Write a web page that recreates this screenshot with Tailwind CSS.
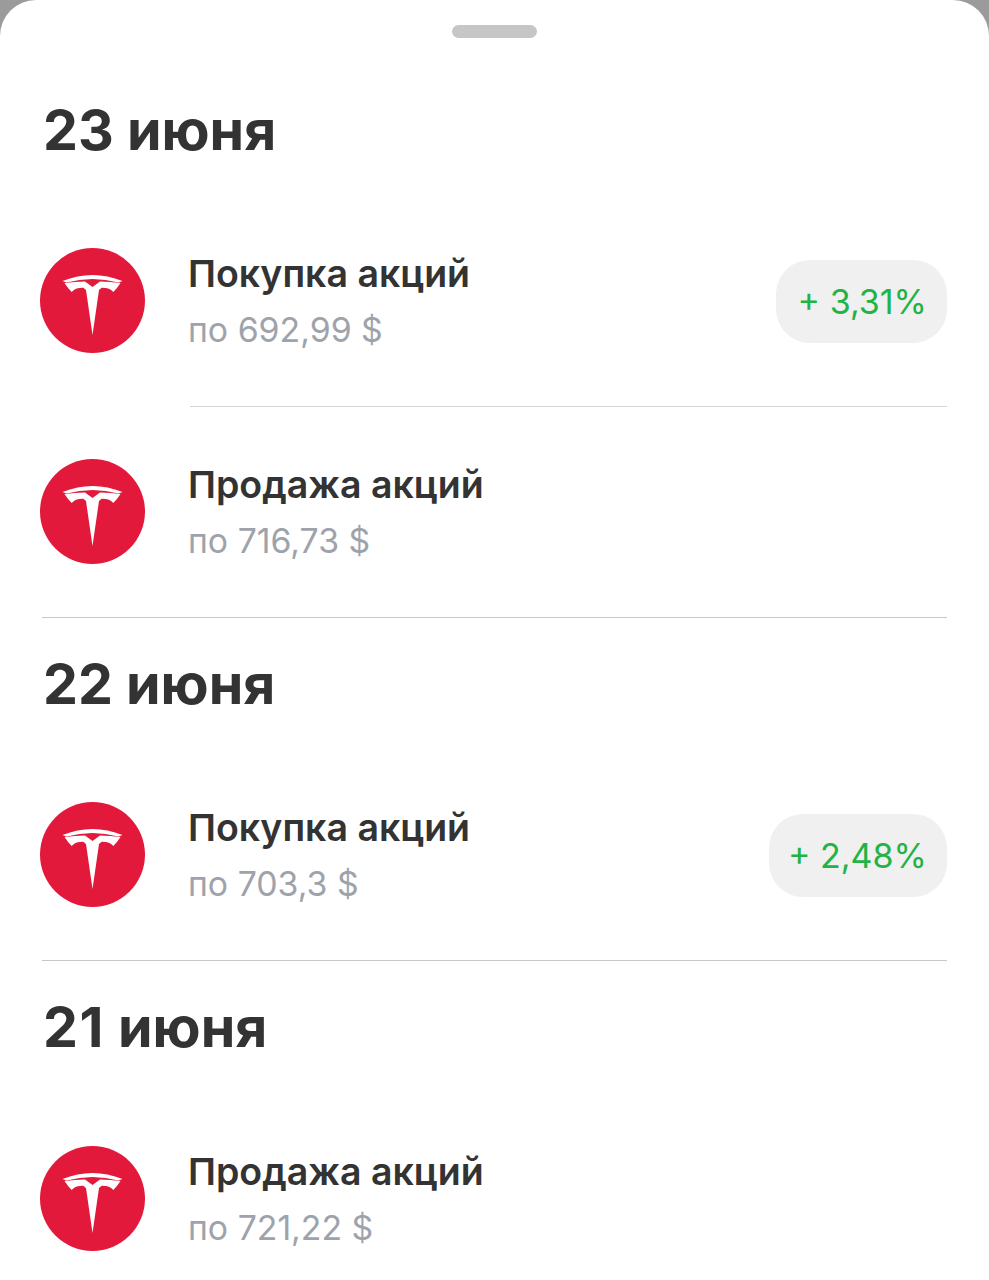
<!DOCTYPE html>
<html lang="ru">

<head>
    <meta charset="UTF-8">
    <meta name="viewport" content="width=device-width, initial-scale=1.0">
    <title>Операции</title>
    <script src="https://cdn.jsdelivr.net/npm/@tailwindcss/browser@4"></script>
</head>

<body class="bg-[#9b9b9b] font-['Inter',sans-serif]">
    <svg class="hidden">
        <symbol id="tesla" viewBox="0 0 105 105">
            <circle cx="52.5" cy="52.5" r="52.5" fill="#e3193b" />
            <path fill="#fff" d="M22.500 33Q52.500 21 82.500 33L78.500 34.500Q52.500 27.500 26.500 34.500Z" />
            <path fill="#fff"
                d="M24.500 35Q35 33.500 45 33.500L52.500 39L60 33.500Q70 33.500 80.500 35Q77 40.500 73.300 44Q70 39.500 61.700 39.700L59 42L52.500 87L46 42L43.300 39.700Q35 39.500 31.700 44Q28 40.500 24.500 35Z" />
        </symbol>
    </svg>

    <div class="w-[989px] h-[1280px] overflow-hidden bg-white rounded-t-[36px] text-[#333333]">
        <div class="flex justify-center pt-[25px]">
            <div class="w-[85px] h-[13px] rounded-full bg-[#c6c6c6]"></div>
        </div>

        <!-- 23 июня -->
        <h2 class="mt-[57px] pl-[43px] h-[70px] leading-[70px] text-[55.5px] font-bold">23 июня</h2>
        <div class="mt-[30px]">
            <div class="flex items-center h-[211px] pl-[40px] pr-[42px]">
                <svg class="w-[105px] h-[105px] shrink-0"><use href="#tesla" /></svg>
                <div class="ml-[43px] pt-[2px] flex-1">
                    <div class="h-[56px] leading-[56px] text-[37.500px] font-semibold">Покупка акций</div>
                    <div class="h-[56px] leading-[56px] text-[33.800px] text-[#9ea3ab]">по 692,99 $</div>
                </div>
                <div class="flex items-center justify-end mt-[2px] w-[171px] h-[83px] pr-[20px] rounded-[34px] bg-[#f0f0f0] text-[34px] text-[#22b347]">+ 3,31%</div>
            </div>
            <div class="ml-[190px] mr-[42px] h-px bg-[#d6d6d6]"></div>
            <div class="flex items-center h-[210px] pb-[2px] pl-[40px] pr-[42px]">
                <svg class="w-[105px] h-[105px] shrink-0"><use href="#tesla" /></svg>
                <div class="ml-[43px] pt-[4px] flex-1">
                    <div class="h-[56px] leading-[56px] text-[37.500px] font-semibold">Продажа акций</div>
                    <div class="h-[56px] leading-[56px] text-[33.800px] text-[#9ea3ab]">по 716,73 $</div>
                </div>
            </div>
        </div>
        <div class="ml-[42px] mr-[42px] h-px bg-[#c8c8c8]"></div>

        <!-- 22 июня -->
        <h2 class="mt-[31px] pl-[43px] h-[70px] leading-[70px] text-[55.5px] font-bold">22 июня</h2>
        <div class="mt-[30px]">
            <div class="flex items-center h-[211px] pl-[40px] pr-[42px]">
                <svg class="w-[105px] h-[105px] shrink-0"><use href="#tesla" /></svg>
                <div class="ml-[43px] pt-[3px] flex-1">
                    <div class="h-[56px] leading-[56px] text-[37.500px] font-semibold">Покупка акций</div>
                    <div class="h-[56px] leading-[56px] text-[33.800px] text-[#9ea3ab]">по 703,3 $</div>
                </div>
                <div class="flex items-center justify-end mt-[2px] w-[178px] h-[83px] pr-[20px] rounded-[34px] bg-[#f0f0f0] text-[34px] text-[#22b347]">+ 2,48%</div>
            </div>
        </div>
        <div class="ml-[42px] mr-[42px] h-px bg-[#c8c8c8]"></div>

        <!-- 21 июня -->
        <h2 class="mt-[31px] pl-[43px] h-[70px] leading-[70px] text-[55.5px] font-bold"><span class="tracking-[1.5px]">21</span> июня</h2>
        <div class="mt-[31px]">
            <div class="flex items-center h-[211px] pl-[40px] pr-[42px]">
                <svg class="w-[105px] h-[105px] shrink-0"><use href="#tesla" /></svg>
                <div class="ml-[43px] pt-[2px] flex-1">
                    <div class="h-[56px] leading-[56px] text-[37.500px] font-semibold">Продажа акций</div>
                    <div class="h-[56px] leading-[56px] text-[33.800px] text-[#9ea3ab]">по 721,22 $</div>
                </div>
            </div>
        </div>
    </div>
</body>

</html>
